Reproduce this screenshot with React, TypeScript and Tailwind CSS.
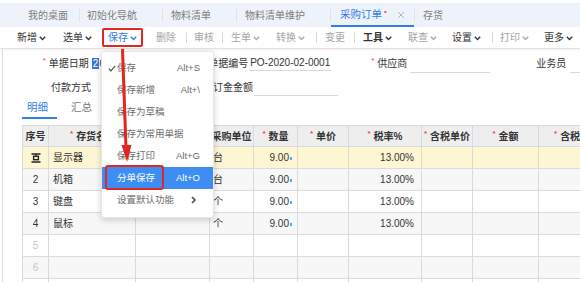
import React from "react";

const Chev = ({ c = "#666" }: { c?: string }) => (
  <svg width="7" height="5" viewBox="0 0 7 5" className="ml-[2px] mt-[1px] shrink-0">
    <path d="M0.8 0.8 L3.5 3.6 L6.2 0.8" fill="none" stroke={c} strokeWidth="1.4" />
  </svg>
);

const Sep = () => <span className="block w-px h-[11px] bg-[#d6d6d6]" />;
const TabSep = () => <span className="block w-px h-[13px] bg-[#dde3ec]" />;

const Star = () => <span className="text-[#f04848] text-[8px] leading-none mr-[3px] -mt-[4px]">*</span>;

type Row = { n: string; name: string; unit: string; qty: string; rate: string; bg: string; gray?: boolean; icon?: boolean };

const rows: Row[] = [
  { n: "", name: "显示器", unit: "台", qty: "9.00", rate: "13.00%", bg: "bg-[#fdf6d2]", icon: true },
  { n: "2", name: "机箱", unit: "台", qty: "9.00", rate: "13.00%", bg: "bg-[#f7f7f7]" },
  { n: "3", name: "键盘", unit: "个", qty: "9.00", rate: "13.00%", bg: "bg-white" },
  { n: "4", name: "鼠标", unit: "个", qty: "9.00", rate: "13.00%", bg: "bg-[#f7f7f7]" },
  { n: "5", name: "", unit: "", qty: "", rate: "", bg: "bg-white", gray: true },
  { n: "6", name: "", unit: "", qty: "", rate: "", bg: "bg-[#f7f7f7]", gray: true },
  { n: "7", name: "", unit: "", qty: "", rate: "", bg: "bg-white", gray: true },
];

const MenuItem = ({ label, sc, check, active, arrow }: { label: string; sc?: string; check?: boolean; active?: boolean; arrow?: boolean }) => (
  <div className={`relative h-[22px] flex items-center pl-[15px] pr-[13px] whitespace-nowrap ${active ? "bg-[#3d8df2] text-white" : "text-[#6b6b6b]"}`}>
    {check && (
      <svg width="8" height="7" viewBox="0 0 8 7" className="absolute left-[6px] top-[8px]">
        <path d="M0.8 3.6 L3 5.8 L7.2 0.8" fill="none" stroke="#555" strokeWidth="1.3" />
      </svg>
    )}
    <span className="flex-1">{label}</span>
    {sc && <span className="text-[9.5px]">{sc}</span>}
    {arrow && (
      <svg width="5" height="8" viewBox="0 0 5 8" className="mr-[4px]">
        <path d="M1 1 L4 4 L1 7" fill="none" stroke="#444" strokeWidth="1.5" />
      </svg>
    )}
    {active && <span className="absolute left-[3px] top-[-2px] w-[59px] h-[25px] border-2 border-[#e3261f] rounded-[3px]" />}
  </div>
);

const Tool = ({ label, chev, dis, bold, ml }: { label: string; chev?: boolean; dis?: boolean; bold?: boolean; ml: string }) => (
  <span className={`${ml} shrink-0 whitespace-nowrap flex items-center ${dis ? "text-[#a5a5a5]" : "text-[#333]"} ${bold ? "font-bold" : ""}`}>
    {label}
    {chev && <Chev c={dis ? "#aaa" : "#333"} />}
  </span>
);

export default function App() {
  return (
    <div className="relative w-[580px] h-[282px] overflow-hidden bg-white font-['Liberation_Sans','Noto_Sans_CJK_SC',sans-serif] text-[10px] text-[#333]">
      {/* Tab bar */}
      <div className="mt-[3px] h-[24px] bg-[#eef3fb] flex items-center text-[10px] text-[#7d7d7d] whitespace-nowrap">
        <span className="ml-[28px]">我的桌面</span>
        <span className="ml-[11px]"><TabSep /></span>
        <span className="ml-[7px]">初始化导航</span>
        <span className="ml-[25px]"><TabSep /></span>
        <span className="ml-[8px]">物料清单</span>
        <span className="ml-[25px]"><TabSep /></span>
        <span className="ml-[8px]">物料清单维护</span>
        <span className="ml-[25px]"><TabSep /></span>
        <div className="h-full w-[83px] flex items-center border-b-2 border-[#2f7fe6] pl-[9px] pt-[2px]">
          <span className="text-[#2f7fe6] text-[10.5px]">采购订单</span>
          <span className="text-[#f04848] text-[8px] ml-[2px] -mt-[6px]">•</span>
          <svg width="8" height="8" viewBox="0 0 8 8" className="ml-[10px]">
            <path d="M1 1 L7 7 M7 1 L1 7" stroke="#b5b5b5" strokeWidth="1" />
          </svg>
        </div>
        <TabSep />
        <span className="ml-[8px]">存货</span>
      </div>

      {/* Toolbar */}
      <div className="h-[22px] flex items-center text-[10px] border-b border-[#e2e2e2] shadow-[0_1px_2px_rgba(0,0,0,0.06)]">
        <Tool ml="ml-[17px]" label="新增" chev />
        <Tool ml="ml-[17px]" label="选单" chev />
        <span className="ml-[10px] shrink-0 whitespace-nowrap h-[19px] w-[41px] border-2 border-[#e3261f] rounded-[2px] flex items-center justify-center text-[#2f7fe6]">保存<Chev c="#2f7fe6" /></span>
        <Tool ml="ml-[13px]" label="删除" dis />
        <span className="ml-[10px]"><Sep /></span>
        <Tool ml="ml-[7px]" label="审核" dis />
        <span className="ml-[8px]"><Sep /></span>
        <Tool ml="ml-[8px]" label="生单" chev dis />
        <Tool ml="ml-[16px]" label="转换" chev dis />
        <span className="ml-[11px]"><Sep /></span>
        <Tool ml="ml-[8px]" label="变更" dis />
        <span className="ml-[9px]"><Sep /></span>
        <Tool ml="ml-[8px]" label="工具" chev bold />
        <Tool ml="ml-[16px]" label="联查" chev dis />
        <Tool ml="ml-[15px]" label="设置" chev />
        <span className="ml-[11px]"><Sep /></span>
        <Tool ml="ml-[7px]" label="打印" chev dis />
        <Tool ml="ml-[15px]" label="更多" chev />
      </div>

      {/* Panel */}
      <div className="ml-[2px] h-[233px] border-l border-[#dcdcdc] overflow-hidden">
        {/* form row 1 */}
        <div className="mt-[2px] h-[24px] flex items-center whitespace-nowrap">
          <div className="w-[88px] flex items-center justify-end"><Star />单据日期</div>
          <div className="ml-[3px] w-[110px] h-[16px] flex items-center">
            <span className="bg-[#3875d7] text-white px-[1px] leading-[11px]">2</span>
            <span>020-02-25</span>
          </div>
          <div className="ml-[9px] w-[39px]">单据编号</div>
          <div className="ml-[2px] w-[84px] h-[16px] border-b border-[#d9d9d9] flex items-center pl-[1px]">PO-2020-02-0001</div>
          <div className="ml-[40px] flex items-center"><Star />供应商</div>
          <div className="ml-[3px] w-[82px] h-[20px] border-b border-[#d9d9d9]" />
          <div className="ml-[46px]">业务员</div>
          <div className="ml-[4px] w-[10px] h-[20px] border-b border-[#d9d9d9]" />
        </div>
        {/* form row 2 */}
        <div className="h-[24px] flex items-center whitespace-nowrap">
          <div className="w-[88px] text-right">付款方式</div>
          <div className="ml-[3px] w-[110px] h-[16px]" />
          <div className="ml-[9px] w-[39px]">订金金额</div>
          <div className="ml-[2px] w-[84px] h-[18px] border-b border-[#d9d9d9]" />
        </div>
        {/* tabs */}
        <div className="h-[20px] flex items-end ml-[19px]">
          <div className="w-[35px] h-full flex items-center justify-center border-b-2 border-[#2f7fe6] text-[#2f7fe6] text-[10.5px] pr-[4px] pb-[1px]">明细</div>
          <div className="ml-[14px] h-full flex items-center text-[10.5px] text-[#777] pb-[3px]">汇总</div>
        </div>
        {/* table */}
        <div className="mt-[6px] ml-[19px]">
          <table className="table-fixed border-collapse w-[576px]">
            <colgroup>
              <col className="w-[26px]" />
              <col className="w-[87px]" />
              <col className="w-[74px]" />
              <col className="w-[44px]" />
              <col className="w-[44px]" />
              <col className="w-[51px]" />
              <col className="w-[73px]" />
              <col className="w-[51px]" />
              <col className="w-[66px]" />
              <col className="w-[60px]" />
            </colgroup>
            <thead>
              <tr className="h-[21px] bg-[#eeeeee] text-[10px] font-bold text-[#333]">
                <th className="border border-[#dadada] font-bold">序号</th>
                <th className="border border-[#dadada] font-bold"><span className="flex items-center pl-[21px] whitespace-nowrap"><Star />存货名称</span></th>
                <th className="border border-[#dadada] font-bold">存货编码</th>
                <th className="border border-[#dadada] font-bold whitespace-nowrap">采购单位</th>
                <th className="border border-[#dadada] font-bold"><span className="flex items-center justify-center"><Star />数量</span></th>
                <th className="border border-[#dadada] font-bold"><span className="flex items-center justify-center"><Star />单价</span></th>
                <th className="border border-[#dadada] font-bold"><span className="flex items-center justify-center"><Star />税率%</span></th>
                <th className="border border-[#dadada] font-bold"><span className="flex items-center justify-center whitespace-nowrap"><Star />含税单价</span></th>
                <th className="border border-[#dadada] font-bold"><span className="flex items-center justify-center"><Star />金额</span></th>
                <th className="border border-[#dadada] font-bold"><span className="flex items-center pl-[15px] whitespace-nowrap"><Star />含税金额</span></th>
              </tr>
            </thead>
            <tbody>
              {rows.map((r, i) => (
                <tr key={i} className={`h-[22px] ${r.bg}`}>
                  <td className={`border border-[#dadada] text-center ${r.gray ? "text-[#c4c4c4]" : "text-[#333]"}`}>
                    {r.icon ? (
                      <svg width="10" height="10" viewBox="0 0 10 10" className="inline-block">
                        <path d="M0.5 1 H9.5 M0.5 9 H9.5" stroke="#222" strokeWidth="1.6" />
                        <rect x="2.6" y="3.3" width="4.8" height="3.4" fill="none" stroke="#222" strokeWidth="1.4" />
                        <path d="M5 1 V3.3" stroke="#222" strokeWidth="1.2" />
                      </svg>
                    ) : r.n}
                  </td>
                  <td className="border border-[#dadada] pl-[4px]">{r.name}</td>
                  <td className="border border-[#dadada]" />
                  <td className="border border-[#dadada] pl-[3px]">{r.unit}</td>
                  <td className="border border-[#dadada] text-right pr-[8px] relative">
                    {r.qty}
                    {r.qty && <span className="absolute right-[5px] top-[10px] w-[2px] h-[3px] bg-[#5aa9ea]" />}
                  </td>
                  <td className="border border-[#dadada]" />
                  <td className="border border-[#dadada] text-right pr-[7px]">{r.rate}</td>
                  <td className="border border-[#dadada]" />
                  <td className="border border-[#dadada]" />
                  <td className="border border-[#dadada]" />
                </tr>
              ))}
            </tbody>
          </table>
        </div>
      </div>

      {/* Dropdown menu */}
      <div className="absolute left-[101px] top-[51px] w-[113px] h-[167px] bg-white rounded-[3px] shadow-[0_2px_6px_rgba(0,0,0,0.18)] border border-[#e6e6e6] pt-[5px] text-[9.5px] z-10">
        <MenuItem label="保存" sc="Alt+S" check />
        <MenuItem label="保存新增" sc="Alt+\" />
        <MenuItem label="保存为草稿" />
        <MenuItem label="保存为常用单据" />
        <MenuItem label="保存打印" sc="Alt+G" />
        <MenuItem label="分单保存" sc="Alt+O" active />
        <MenuItem label="设置默认功能" arrow />
      </div>

      {/* Red arrow */}
      <svg className="absolute left-0 top-0 z-20 pointer-events-none" width="580" height="282" viewBox="0 0 580 282">
        <path d="M122.5 49 L126 148" stroke="#e3261f" strokeWidth="3" />
        <polygon points="121.5,145 131.5,145 127,162" fill="#e3261f" />
      </svg>
    </div>
  );
}
